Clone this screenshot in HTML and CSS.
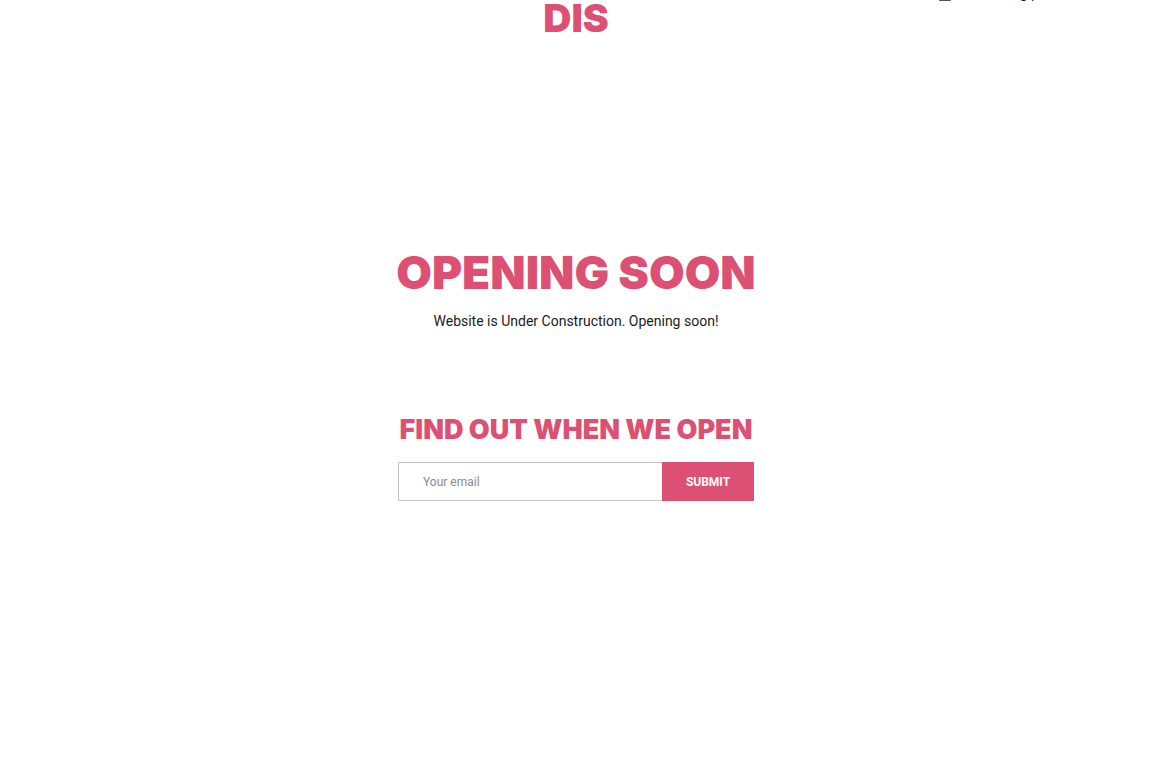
FILE: index.html
```html
<!DOCTYPE html>
<html lang="en">
<head>
<meta charset="utf-8">
<meta name="viewport" content="width=device-width, initial-scale=1">
<title>Opening soon</title>
<link rel="stylesheet" href="styles.css">
</head>
<body>
<div class="page">
  <header class="header">
    <a class="password-link" href="#">
      <svg class="lock" viewBox="0 0 12 16" aria-hidden="true"><path d="M3 7V4a3 3 0 0 1 6 0v3M1 7h10v8H1z" fill="none" stroke="currentColor" stroke-width="1.5"/></svg>
      <span>Enter using password</span>
    </a>
    <div class="logo">DIS</div>
  </header>
  <main class="main">
    <h1 class="title">OPENING SOON</h1>
    <p class="message">Website is Under Construction. Opening soon!</p>
    <h2 class="subtitle">FIND OUT WHEN WE OPEN</h2>
    <form class="signup">
      <input class="email" type="email" aria-label="Your email" placeholder="Your email">
      <button class="submit" type="submit">SUBMIT</button>
    </form>
  </main>
</div>
</body>
</html>
```
FILE: styles.css
```css
* { box-sizing: border-box; }
body {
  margin: 0;
  background: #fff;
  color: #1c1b1b;
  font-family: Roboto, "Liberation Sans", sans-serif;
}
.page { min-height: 100vh; overflow: hidden; }
.header {
  margin-top: -17px;
  padding: 0 60px;
}
.password-link {
  display: flex;
  justify-content: flex-end;
  align-items: center;
  gap: 7px;
  height: 20px;
  color: inherit;
  font-size: 14px;
  line-height: 20px;
  text-decoration: none;
}
.lock { width: 12px; height: 16px; }
.logo, .title, .subtitle {
  margin: 0;
  color: #dc5173;
  font-family: Inter, "Liberation Sans", sans-serif;
  font-weight: 900;
  text-align: center;
  white-space: nowrap;
}
.logo { font-size: 39px; line-height: 30px; }
.main {
  display: flex;
  flex-direction: column;
  align-items: center;
  padding-top: 215px;
}
.title { font-size: 46px; line-height: 48px; }
.message {
  margin: 15px 0 0;
  font-size: 14px;
  line-height: 20px;
}
.subtitle { margin-top: 81px; font-size: 27px; line-height: 36px; }
.signup {
  display: flex;
  width: 100%;
  max-width: 356px;
  height: 39px;
  margin-top: 14px;
}
.email {
  flex: 1;
  min-width: 0;
  padding: 0 24px;
  border: 1px solid #c4c4c4;
  border-right: 0;
  background: #fff;
  color: inherit;
  font: 12px Roboto, sans-serif;
}
.email::placeholder { color: #8a8a8a; opacity: 1; }
.submit {
  width: 92px;
  padding: 0;
  border: 0;
  background: #dc5173;
  color: #fff;
  font: bold 12px Roboto, sans-serif;
}
```
